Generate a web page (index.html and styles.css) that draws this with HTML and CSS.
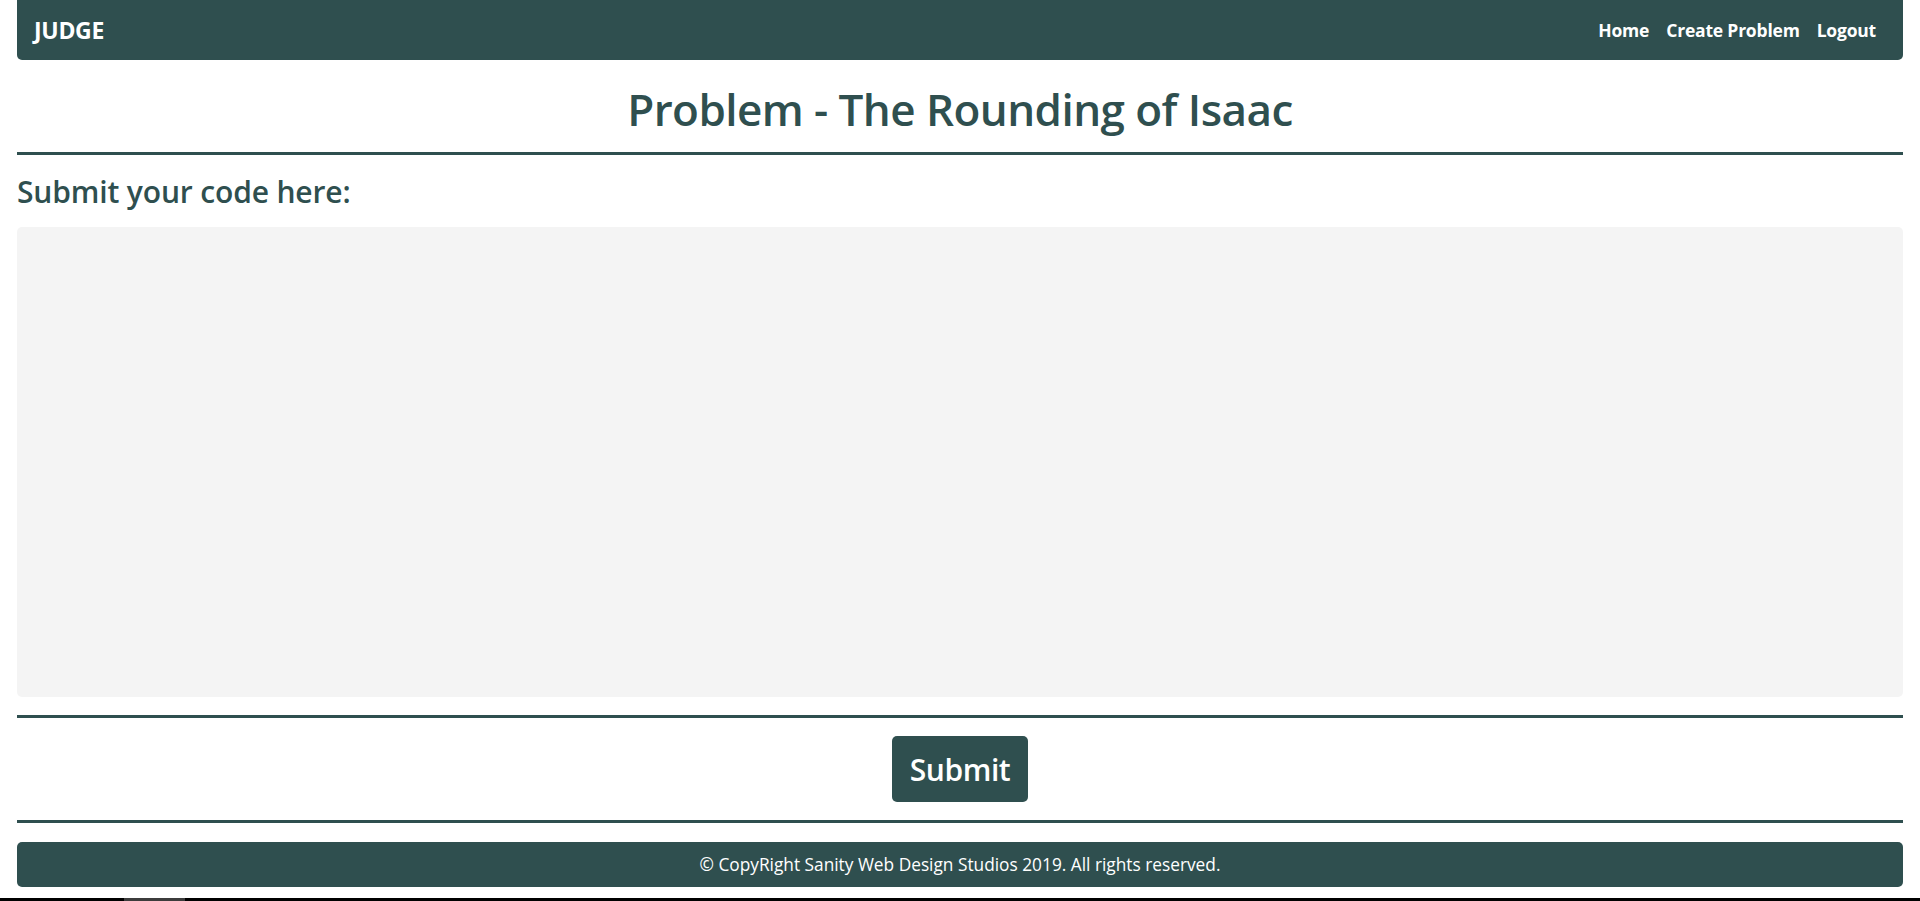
FILE: index.html
```html
<!DOCTYPE html>
<html lang="en">
<head>
<meta charset="utf-8">
<title>JUDGE - Problem</title>
<link rel="stylesheet" href="styles.css">
</head>
<body>
<div class="page">
  <nav class="navbar">
    <a class="brand" href="#">JUDGE</a>
    <ul class="nav-links">
      <li><a href="#">Home</a></li>
      <li><a href="#">Create Problem</a></li>
      <li><a href="#">Logout</a></li>
    </ul>
  </nav>
  <h1 class="title">Problem - The Rounding of Isaac</h1>
  <hr class="rule">
  <h3 class="subtitle">Submit your code here:</h3>
  <textarea class="code" spellcheck="false"></textarea>
  <hr class="rule rule-code">
  <div class="actions">
    <button class="submit" type="button">Submit</button>
  </div>
  <hr class="rule rule-last">
  <footer class="footer">© CopyRight Sanity Web Design Studios 2019. All rights reserved.</footer>
</div>
<div class="bottom-strip"><span class="strip-thumb"></span></div>
</body>
</html>
```

FILE: styles.css
```css
* { box-sizing: border-box; }

html, body {
  margin: 0;
  padding: 0;
  background: #ffffff;
}

body {
  font-family: "Open Sans", "Noto Sans", sans-serif;
  color: #2f4f4f;
}

.page {
  display: flex;
  flex-direction: column;
  padding: 0 17px;
}

.navbar {
  height: 60px;
  background: #2f4f4f;
  border-radius: 0 0 5px 5px;
  display: flex;
  align-items: center;
  justify-content: space-between;
  padding: 0 27px 0 17px;
}

.brand {
  color: #ffffff;
  text-decoration: none;
  font-weight: 700;
  font-size: 23px;
  letter-spacing: -0.3px;
}

.nav-links {
  list-style: none;
  margin: 0;
  padding: 0;
  display: flex;
  gap: 17px;
}

.nav-links a {
  color: #ffffff;
  text-decoration: none;
  font-weight: 700;
  font-size: 17.5px;
  letter-spacing: -0.2px;
}

.title {
  margin: 0;
  padding: 21px 0 15px;
  line-height: 56px;
  font-size: 44px;
  font-weight: 600;
  text-align: center;
  letter-spacing: -0.55px;
}

.rule {
  margin: 0;
  border: 0;
  height: 3px;
  background: #2f4f4f;
}

.subtitle {
  margin: 0;
  padding: 20px 0 18px;
  line-height: 34px;
  font-size: 30px;
  font-weight: 600;
  letter-spacing: -0.15px;
}

.code {
  display: block;
  width: 100%;
  height: 470px;
  border: 0;
  border-radius: 5px;
  background: #f4f4f4;
  resize: none;
  outline: none;
  padding: 8px 12px;
  font-family: "Liberation Mono", monospace;
  font-size: 14px;
}

.rule-code { margin-top: 18px; }

.actions {
  display: flex;
  justify-content: center;
  padding: 18px 0;
}

.submit {
  width: 136px;
  height: 66px;
  border: 0;
  border-radius: 5px;
  background: #2f4f4f;
  color: #ffffff;
  font-family: "Open Sans", "Noto Sans", sans-serif;
  font-size: 30px;
  font-weight: 600;
  letter-spacing: -0.4px;
  padding: 0;
  cursor: pointer;
}

.rule-last { margin-bottom: 19px; }

.footer {
  height: 45px;
  background: #2f4f4f;
  border-radius: 5px;
  color: #ffffff;
  display: flex;
  align-items: center;
  justify-content: center;
  font-size: 17.3px;
  margin-bottom: 11px;
}

.bottom-strip {
  height: 3px;
  background: #000000;
  display: flex;
  padding-left: 124px;
}

.strip-thumb {
  width: 61px;
  height: 3px;
  background: #3c3c3c;
}
```
